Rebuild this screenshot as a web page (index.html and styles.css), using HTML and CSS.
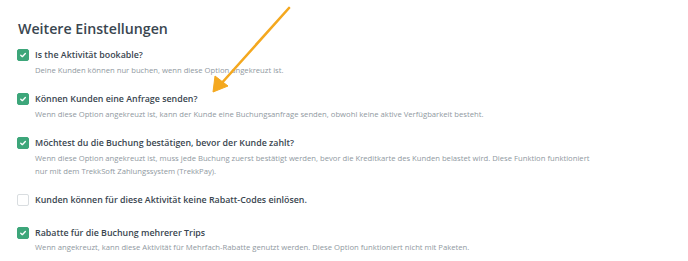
FILE: index.html
```html
<!DOCTYPE html>
<html lang="de">
<head>
<meta charset="utf-8">
<link rel="stylesheet" href="styles.css">
</head>
<body>
<div class="page">
  <h2 class="title">Weitere Einstellungen</h2>
  <div class="opts">
    <div class="opt">
      <span class="box on"><svg viewBox="0 0 12 12"><path d="M3.3 6.2 L5.2 8 L8.8 4.2"/></svg></span>
      <div class="txt">
        <div class="lbl">Is the Aktivität bookable?</div>
        <div class="desc">Deine Kunden können nur buchen, wenn diese Option angekreuzt ist.</div>
      </div>
    </div>
    <div class="opt">
      <span class="box on"><svg viewBox="0 0 12 12"><path d="M3.3 6.2 L5.2 8 L8.8 4.2"/></svg></span>
      <div class="txt">
        <div class="lbl">Können Kunden eine Anfrage senden?</div>
        <div class="desc">Wenn diese Option angekreuzt ist, kann der Kunde eine Buchungsanfrage senden, obwohl keine aktive Verfügbarkeit besteht.</div>
      </div>
    </div>
    <div class="opt">
      <span class="box on"><svg viewBox="0 0 12 12"><path d="M3.3 6.2 L5.2 8 L8.8 4.2"/></svg></span>
      <div class="txt">
        <div class="lbl">Möchtest du die Buchung bestätigen, bevor der Kunde zahlt?</div>
        <div class="desc">Wenn diese Option angekreuzt ist, muss jede Buchung zuerst bestätigt werden, bevor die Kreditkarte des Kunden belastet wird. Diese Funktion funktioniert<br>nur mit dem TrekkSoft Zahlungssystem (TrekkPay).</div>
      </div>
    </div>
    <div class="opt solo">
      <span class="box"></span>
      <div class="txt">
        <div class="lbl">Kunden können für diese Aktivität keine Rabatt-Codes einlösen.</div>
      </div>
    </div>
    <div class="opt">
      <span class="box on"><svg viewBox="0 0 12 12"><path d="M3.3 6.2 L5.2 8 L8.8 4.2"/></svg></span>
      <div class="txt">
        <div class="lbl">Rabatte für die Buchung mehrerer Trips</div>
        <div class="desc">Wenn angekreuzt, kann diese Aktivität für Mehrfach-Rabatte genutzt werden. Diese Option funktioniert nicht mit Paketen.</div>
      </div>
    </div>
  </div>
  <svg class="arrow" viewBox="0 0 688 261" width="688" height="261">
    <path class="shaft" d="M289 8 L220 85"/>
    <path class="head" d="M213 92 L215 76 L228 86 Z"/>
  </svg>
</div>
</body>
</html>
```
FILE: styles.css
```css
html, body {
  margin: 0;
  padding: 0;
  background: #ffffff;
}
.page {
  position: relative;
  width: 688px;
  height: 261px;
  overflow: hidden;
  padding: 19px 0 0 17px;
  box-sizing: border-box;
  font-family: "Open Sans", "Liberation Sans", sans-serif;
}
.title {
  margin: 0 0 9px 1px;
  font-size: 14.2px;
  font-weight: 600;
  line-height: 20px;
  color: #3a4650;
}
.opts {
  display: flex;
  flex-direction: column;
  gap: 15.5px;
}
.opt {
  display: flex;
  align-items: flex-start;
  gap: 7px;
}
.opt.solo {
  margin-bottom: 3px;
}
.box {
  flex: none;
  width: 12px;
  height: 12px;
  margin-top: 1px;
  border-radius: 2px;
  box-sizing: border-box;
  border: 1px solid #d9dde0;
  background: #fff;
  display: flex;
}
.box.on {
  background: #3da67a;
  border-color: #3da67a;
}
.box svg {
  width: 100%;
  height: 100%;
}
.box path {
  fill: none;
  stroke: #fff;
  stroke-width: 1.6;
  stroke-linecap: round;
  stroke-linejoin: round;
}
.txt {
  margin-left: -1px;
}
.lbl {
  font-size: 8.85px;
  font-weight: 600;
  line-height: 14px;
  color: #3a4650;
}
.desc {
  margin-top: 1.5px;
  font-size: 7.68px;
  line-height: 13px;
  color: #9099a1;
}
.arrow {
  position: absolute;
  left: 0;
  top: 0;
  pointer-events: none;
}
.shaft {
  stroke: #f4a81f;
  stroke-width: 2.6;
  stroke-linecap: round;
  fill: none;
}
.head {
  fill: #f4a81f;
  stroke: #f4a81f;
  stroke-width: 1;
  stroke-linejoin: round;
}
```
